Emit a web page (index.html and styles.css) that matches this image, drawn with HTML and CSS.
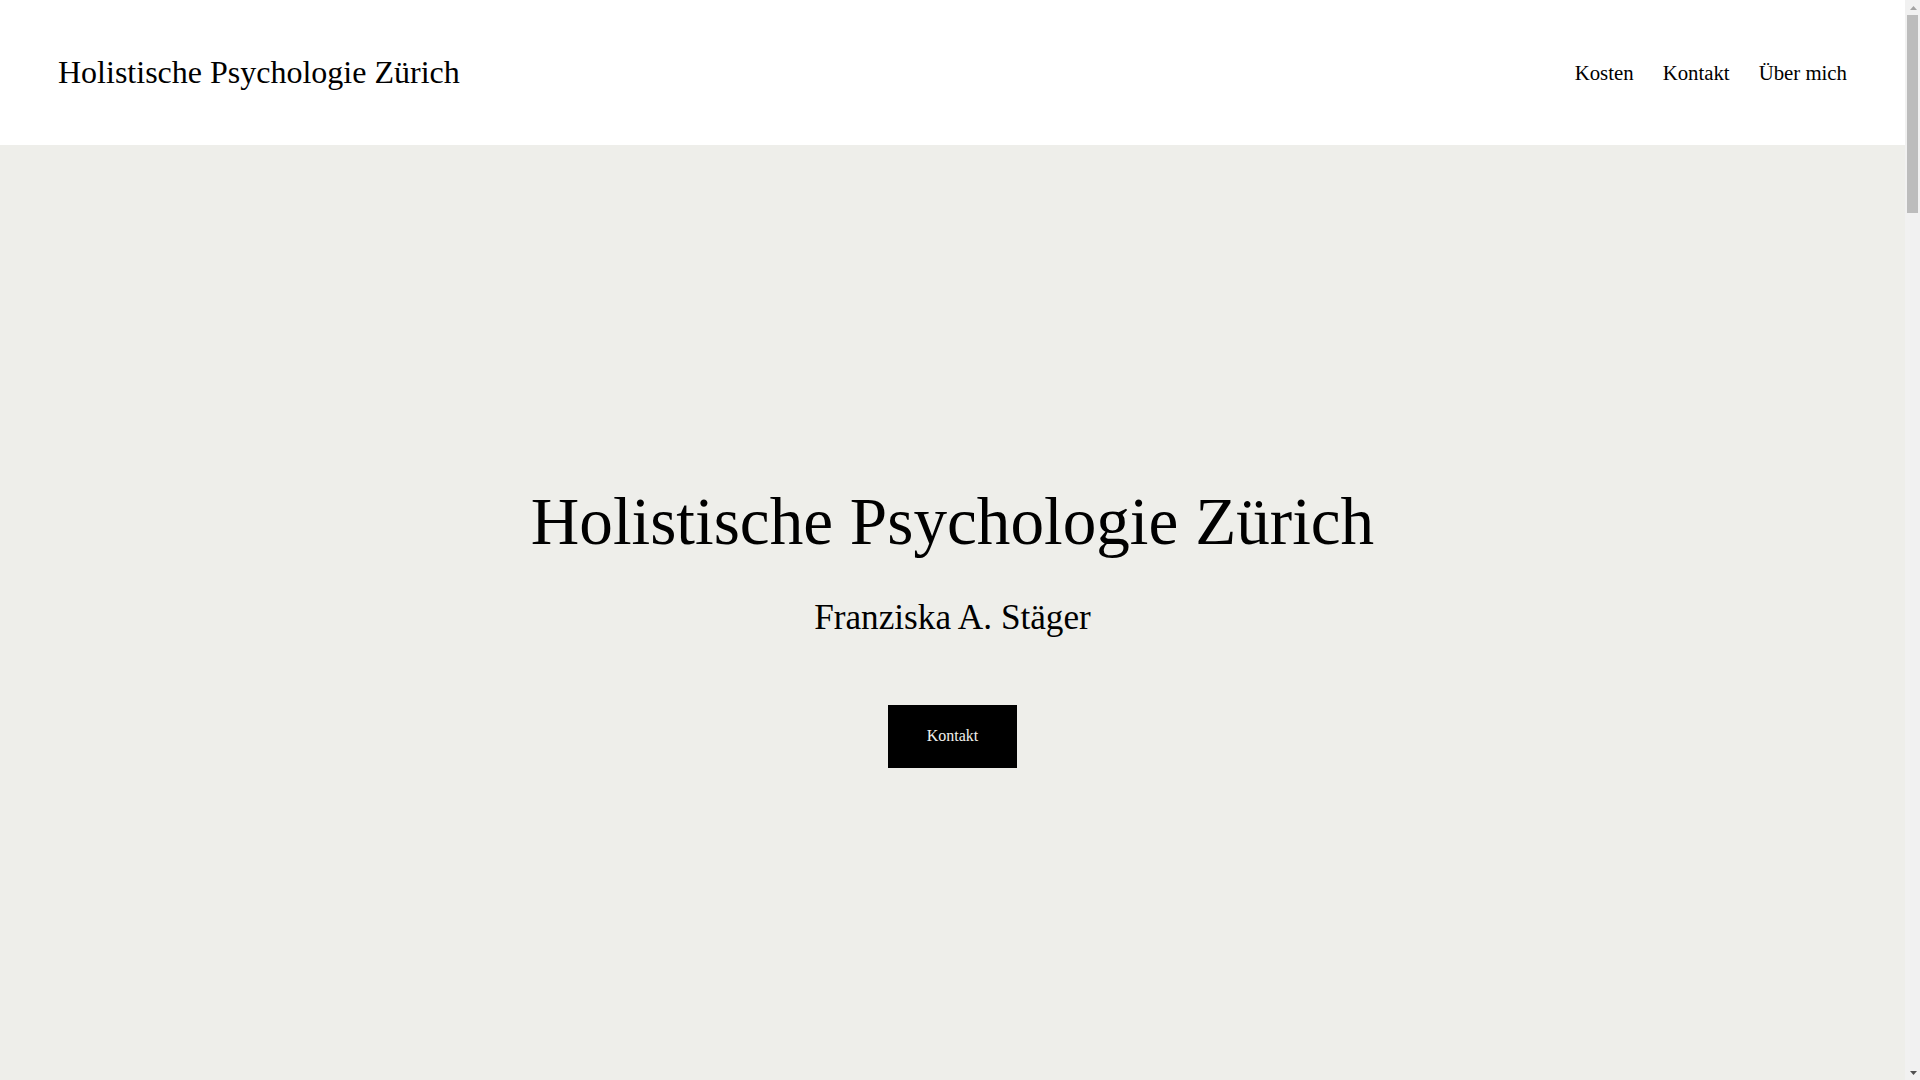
FILE: index.html
```html
<!DOCTYPE html>
<html lang="de">
<head>
<meta charset="utf-8">
<title>Holistische Psychologie Zürich</title>
<link rel="stylesheet" href="styles.css">
</head>
<body>
<div class="page">
  <header class="site-header">
    <a class="site-title" href="#">Holistische Psychologie Zürich</a>
    <nav class="site-nav">
      <a class="nav-link" href="#">Kosten</a>
      <a class="nav-link" href="#">Kontakt</a>
      <a class="nav-link" href="#">Über mich</a>
    </nav>
  </header>
  <main>
    <section class="hero">
      <h1 class="hero-title">Holistische Psychologie Zürich</h1>
      <p class="hero-subtitle">Franziska A. Stäger</p>
      <a class="hero-button" href="#">Kontakt</a>
    </section>
    <section class="content-section"></section>
    <section class="content-section alt"></section>
    <section class="content-section"></section>
    <footer class="site-footer"></footer>
  </main>
</div>
<div class="scrollbar" aria-hidden="true">
  <div class="sb-button">
    <svg width="7" height="4" viewBox="0 0 7 4"><polygon points="0,4 7,4 3.5,0" fill="#a3a3a3"/></svg>
  </div>
  <div class="sb-track"><div class="sb-thumb"></div></div>
  <div class="sb-button">
    <svg width="7" height="4" viewBox="0 0 7 4"><polygon points="0,0 7,0 3.5,4" fill="#505050"/></svg>
  </div>
</div>
</body>
</html>
```
FILE: styles.css
```css
html, body {
  margin: 0;
  padding: 0;
}
body {
  font-family: "Liberation Serif", "Times New Roman", serif;
  color: #000;
  background: #fff;
}
a {
  color: inherit;
  text-decoration: none;
}
.page {
  margin-right: 15px;
}
.site-header {
  display: flex;
  justify-content: space-between;
  align-items: center;
  height: 145px;
  padding: 0 58px;
  background: #fff;
  box-sizing: border-box;
}
.site-title {
  font-size: 32px;
  line-height: normal;
}
.site-nav {
  display: flex;
  gap: 29px;
}
.nav-link {
  font-size: 20.8px;
  line-height: normal;
}
.hero {
  display: flex;
  flex-direction: column;
  align-items: center;
  height: 960px;
  box-sizing: border-box;
  padding-top: 337px;
  background: rgb(238, 238, 234);
  text-align: center;
}
.hero-title {
  margin: 0;
  font-size: 67.2px;
  font-weight: 400;
  line-height: 1.2;
}
.hero-subtitle {
  margin: 34px 0 0;
  font-size: 35.2px;
  line-height: 1.2;
}
.hero-button {
  display: flex;
  align-items: center;
  justify-content: center;
  margin-top: 66px;
  width: 129px;
  height: 63px;
  box-sizing: border-box;
  background: #000;
  color: #f0f0ec;
  font-size: 16px;
}
.content-section {
  height: 1300px;
  background: #fff;
}
.content-section.alt {
  background: rgb(238, 238, 234);
}
.site-footer {
  height: 730px;
  background: #fff;
}
.scrollbar {
  position: fixed;
  top: 0;
  right: 0;
  bottom: 0;
  width: 15px;
  display: flex;
  flex-direction: column;
  background: #f1f1f1;
}
.sb-button {
  height: 15px;
  flex: none;
  display: flex;
  align-items: center;
  justify-content: center;
}
.sb-button svg {
  display: block;
  margin-left: 2px;
}
.sb-track {
  flex: 1;
  padding: 0 2px;
}
.sb-thumb {
  height: 198px;
  background: #bcbcbc;
}
```
